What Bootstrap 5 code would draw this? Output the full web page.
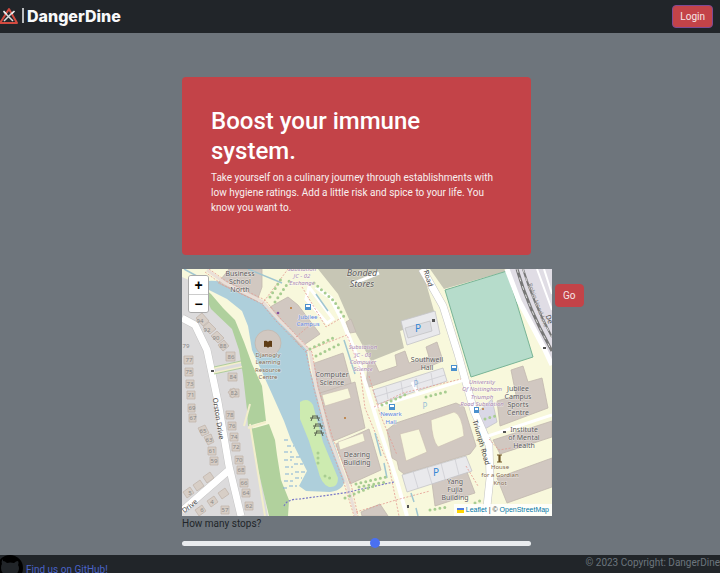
<!DOCTYPE html>
<html lang="en">
<head>
<meta charset="utf-8">
<meta name="viewport" content="width=device-width, initial-scale=1">
<title>DangerDine</title>
<link href="https://cdn.jsdelivr.net/npm/bootstrap@5.3.0/dist/css/bootstrap.min.css" rel="stylesheet">
<script src="https://cdn.jsdelivr.net/npm/bootstrap@5.3.0/dist/js/bootstrap.bundle.min.js" defer></script>
<style>
body{font-family:Roboto,"Liberation Sans",sans-serif;font-size:10px;line-height:15px;background:#6e757c;color:#212529;height:100vh;overflow:hidden}
.topbar{background:#212529;min-height:33px;padding:0 7px 0 0}
.brand{font:800 16px/20px Inter,sans-serif;color:#f8f9fa;text-decoration:none;padding-bottom:2px}
.brand-rule{width:2px;height:15px;background:#b9bcbe;margin:0 3px 0 4px}
.btn-danger-dine{--bs-btn-color:#f6e6e7;--bs-btn-bg:#c34348;--bs-btn-border-color:#c34348;--bs-btn-hover-color:#fff;--bs-btn-hover-bg:#aa383d;--bs-btn-font-size:10px;--bs-btn-line-height:15px;--bs-btn-padding-y:3px;--bs-btn-padding-x:7px;--bs-btn-border-radius:4px}
.btn-login{--bs-btn-border-color:#7d4a93}
.planner{margin-left:25%;padding:44px 0 0 2px}
.hero,.stops{max-width:349px}
.hero{background:#c34348;color:#f8f0f0;border-radius:4px;padding:29px 29px 40px;margin-bottom:14px}
.hero h1{font-size:24px;line-height:30px;font-weight:500;margin-bottom:4px;color:#fff}
.map-box{flex:0 1 370px;min-width:0}
.map-box > svg{display:block;width:100%;height:auto}
.zoomer{top:6px;left:6px;border:1px solid #aaa;border-radius:3px;overflow:hidden}
.zoomer button{display:block;width:19px;height:18px;border:0;background:#fff;color:#000;font:700 14px/14px "Liberation Sans",sans-serif;padding:0}
.zoomer button+button{border-top:1px solid #ccc}
.credit{right:0;bottom:0;background:rgba(255,255,255,.8);font:7px/12px "Liberation Sans",sans-serif;padding:0 3px;color:#333}
.credit a{color:#0078a8;text-decoration:none}
.flag{width:7px;height:5px}
.go-btn{margin:15px 0 0 3px}
.stops .form-range{height:10px;padding:0}
.form-range::-webkit-slider-runnable-track{height:5px;background:#e9ecef}
.form-range::-webkit-slider-thumb{width:10px;height:10px;margin-top:-3px;background:#4a70f0}
.stops label{margin-bottom:7px}
.foot{background:#212529;height:40px;margin-top:7px;color:#6c757d}
.foot a{color:#4a63c8;padding-top:7px;text-decoration:none}
.foot svg{margin:0 3px 0 -3px}
</style>
</head>
<body>
<nav class="topbar d-flex align-items-center justify-content-between">
  <a class="brand d-flex align-items-center" href="#">
    <svg width="18" height="18" viewBox="0 0 18 18" aria-hidden="true"><path d="M9 2 17 16H0Z" fill="#24272b" stroke="#d34b40" stroke-width="2" stroke-linejoin="round"/><path d="M4 5l9 9M13 5l-9 9" stroke="#ddd" stroke-width="1.500"/><path d="M3.500 4l3 3M14.500 4l-3 3" stroke="#eee" stroke-width="1.600"/></svg>
    <span class="brand-rule"></span>DangerDine
  </a>
  <button type="button" class="btn btn-danger-dine btn-login">Login</button>
</nav>
<main class="planner">
  <section class="hero">
    <h1>Boost your immune system.</h1>
    <p class="mb-0">Take yourself on a culinary journey through establishments with low hygiene ratings. Add a little risk and spice to your life. You know you want to.</p>
  </section>
  <div class="d-flex align-items-start">
    <div class="map-box position-relative">
      <svg viewBox="182 269 370 247" role="img" aria-label="Street map of Jubilee Campus" font-family="Noto Sans, sans-serif">
        <rect x="182" y="269" width="370" height="247" fill="#f8f8dc"/>
        <!-- housing area -->
        <path d="M182 277 198 284 211 303 235 329 240 352 251 417 268 516H182Z" fill="#dcdbdc"/>
        <!-- woodland -->
        <path d="M200 285 211 294 223 308 235 320 244 342 252 364 262 386 266 421 248 426 247 410 243 375 239 350 232 329 211 309Z" fill="#afd09d"/>
        <path d="M251 429 269 424 275 440 277 455 281 480 289 500 288 516H269L258 469Z" fill="#b1d19d"/>
        <!-- lake -->
        <path d="M208 281Q220 280 231 286L246 295 265 305 283 324 307 350 310 369 322 410 338 455 345 478Q345 490 330 492L306 491 299 486 307 471 291 440 284 421 272 394 262 372 252 350 248 326 242 311 227 299 209 290Z" fill="#aecfdb"/>
        <path d="M300 402Q308 397 313 405L323 442 338 478Q338 488 329 487 321 484 318 470L309 441 300 419Z" fill="#cdebb0"/>
        <path d="M284 440h6m-3 6h7m-10 6h8m-2 5h10m-16 3h8m2 4h9m-18 3h8m2 5h10m-20 2h8m2 4h7m-18 3h9m-4 5h8m-14 2h6" stroke="#82b0d7" stroke-dasharray="4 2" fill="none"/>
        <!-- ground and pitch -->
        <path d="M318 269H422L436 318 400 331 404 348 371 361 352 326 338 294Z" fill="#c7c6b5"/>
        <path d="M430 269H504L507 271 444 289Z" fill="#c7c6b5"/>
        <path d="M445 290 507 271 533 357 471 377Z" fill="#b6dccb" stroke="#78b496"/>
        <path d="M507 269H552V361L544 350Z" fill="#e0dde5"/>
        <path d="M507 269 519 301 544 348 552 365" stroke="#fff" stroke-width="5" fill="none"/>
        <g fill="none"><path d="M517 269Q528 308 552 351" stroke="#777" stroke-width="3"/><path d="M523 269Q533 302 552 337" stroke="#777" stroke-width="2"/><path d="M517 269Q528 308 552 351M523 269Q533 302 552 337" stroke="#ddd" stroke-dasharray="4 5"/><path d="M537 269 552 310M544 269 552 294" stroke="#fff" stroke-width="2"/></g>
        <!-- buildings -->
        <g fill="#d1c8c1" stroke="#c2b7af" stroke-width=".8">
          <path d="M229 269H262V287L257 301 218 283Z"/>
          <path d="M288 297 298 305 320 334 301 347 270 307Z"/>
          <circle cx="268" cy="343" r="13"/>
          <path d="M312 364 343 353 352 386 320 399Z"/>
          <path d="M320 393 355 382 365 428 331 442Z"/>
          <path d="M336 444 369 429 381 470 350 484Z"/>
          <path d="M368 363 374 361 379 372 397 366 395 355 405 351 409 363 429 357 426 347 437 342 443 361 425 368 366 388Z"/>
          <path d="M346 322 351 319 356 332 350 333Z"/>
          <path d="M511 370 523 366 528 382 542 378 548 408 500 426 497 401 511 397 516 395Z"/>
          <path d="M387 430 396 423 456 403 464 407 476 446 470 454 404 474 399 470 397 461 392 458Z"/>
          <path d="M493 440 552 421V437L500 454Z"/>
          <path d="M497 478 552 458V487L507 503Z"/>
          <path d="M432 483 467 472 475 493 435 506Z"/>
          <path d="M361 512 380 504 388 516H362Z"/>
        </g>
        <g fill="#f8f8dc" stroke="#c9bcb1" stroke-width=".6"><path d="M322 395 348 388 351 398 325 406Z"/><path d="M338 442 363 433 365 441 340 450Z"/><path d="M400 434 419 429 427 452 406 461Z"/><path d="M431 420 454 412Q462 414 464 436L438 447Q432 440 431 420Z"/></g>
        <!-- car parks -->
        <g fill="#e9e9ec" stroke="#c4c4c8" stroke-width=".8"><path d="M401 321 435 311 440 334 407 345Z"/><path d="M373 390 443 368 447 381 378 404Z"/><path d="M402 475 466 456 472 471 407 492Z"/><path d="M477 413 492 399 497 422 483 430Z" fill="#dad8e6"/></g>
        <path d="M405 328 430 321 432 331 408 338Z" fill="#dcdde2" stroke="#bbb" stroke-width=".6"/>
        <path d="M375 397 445 375M413 471l5 17M427 467l5 17M441 463l4 16M455 459l4 16M386 387l2 12M401 382l2 12M416 378l2 12M431 373l2 12" stroke="#cacad0" stroke-width=".7"/>
        <!-- streets -->
        <g fill="none" stroke="#c4c4c4" stroke-width="8"><path d="M182 318 195 325 207 350 218 402 229 466 241 516M228 471 182 511M422 269 443 306 458 354 474 411 489 445 490 478 486 516"/></g>
        <g fill="none" stroke="#fff" stroke-width="7"><path d="M182 318 195 325 207 350 218 402 229 466 241 516M228 471 182 511M422 269 443 306 458 354 474 411 489 445 490 478 486 516"/><path d="M316 287 331 298 342 320 356 354 366 385 379 427 396 478 407 516" stroke-width="4"/><path d="M373 408 464 380M488 436 552 415M412 382 418 394M309 287 333 319 327 323 306 299Z" stroke-width="3"/><path d="M352 284 379 273" stroke-width="3"/></g>
        <path d="M248 428 266 422M244 426 250 404M250 424 265 516M214 368 241 362M214 373 242 367" stroke="#f2eecb" stroke-width="2" fill="none"/>
        <path d="M214 367 241 361M214 374 242 368" stroke="#9fc58e" stroke-width=".8" fill="none"/>
        <!-- paths -->
        <path d="M207 270 225 283 263 302 279 320 310 351 316 387 329 437 347 483 356 516" fill="none" stroke="#eadfd8" stroke-width="3"/>
        <g fill="none" stroke="#e39b92" stroke-width=".8" stroke-dasharray="2 1.500"><path d="M205 272 223 285 262 304 276 321 306 352 314 389 327 438 344 483 354 516M209 269 226 281 265 300 281 319 312 352 318 386 332 436 351 484 358 516M262 304 288 269M296 337 310 325M302 287 326 327 341 318M306 351 347 335 360 369 365 408 389 466 399 516M356 512 396 500 430 491M369 376 380 414 397 455M374 407 403 393 461 379M489 439 499 450 511 448M466 466 478 486"/></g>
        <path d="M284 506Q287 499 300 499L344 493 394 482" fill="none" stroke="#7776c7" stroke-width="1.200" stroke-dasharray="2 1.500"/>
        <g fill="none" stroke="#a0c6d0" stroke-width="1.500"><path d="M184 269 206 281M248 269 282 283M344 340 355 374M375 433 381 456M384 463 387 478M316 294 328 311M411 493l3 9M416 508l2 8"/></g>
        <!-- shrubs -->
        <g fill="none" stroke="#a8cd91" stroke-width="3" stroke-linecap="round" stroke-dasharray="0 5"><path d="M270 297 281 279M275 302 290 280M314 283 334 301 346 320M310 349 337 336M316 356 340 344M356 484 386 477M359 487 386 482M345 498 354 494 374 486M318 453v14M325 476 332 479M382 405 409 393M426 397 449 391M485 419 495 416M475 503 482 500M430 510 448 507"/></g>
        <!-- houses -->
        <g fill="#d7cec6" stroke="#beb1a7" stroke-width=".7"><path d="M226 352h9v9h-9zM228 373h9v8h-9zM230 389h9v8h-9zM184 356h9v8h-9zM185 368h8v8h-8zM186 380h8v8h-8zM187 391h8v8h-8zM188 404h7v8h-7zM189 414h7v8h-7zM226 411h8v8h-8zM228 422h8v8h-8zM230 433h8v8h-8zM232 443h8v8h-8zM235 456h8v8h-8zM237 466h8v8h-8zM240 479h8v8h-8zM242 489h8v8h-8zM245 502h8v8h-8zM208 447h8v8h-8zM210 457h8v8h-8zM221 506h8v8h-8z"/><path d="M196 318l6-5 7 8-6 5zM203 327l6-5 7 7-6 5zM211 336l6-5 7 7-6 5zM218 345l6-5 5 6-6 5zM228 392l6-4 4 6-6 4zM198 428l7-3 4 8-7 3zM204 437l7-3 3 8-6 3zM183 492l7-5 4 6-7 5zM193 485l7-5 4 6-7 5zM203 477l7-5 4 6-7 5zM195 510l7-5 4 6-7 5zM207 501l7-5 4 6-7 5zM218 493l7-5 4 6-7 5z"/></g>
        <g fill="#888" font-size="6" text-anchor="middle">
          <text x="231" y="359">86</text><text x="233" y="379">84</text><text x="234" y="395">82</text><text x="189" y="362">77</text><text x="189" y="374">75</text><text x="190" y="386">73</text><text x="191" y="397">71</text><text x="192" y="410">69</text><text x="193" y="420">67</text><text x="230" y="417">78</text><text x="232" y="428">76</text><text x="234" y="439">74</text><text x="236" y="449">72</text><text x="239" y="462">70</text><text x="241" y="472">68</text><text x="244" y="485">66</text><text x="246" y="495">64</text><text x="249" y="508">62</text><text x="212" y="453">61</text><text x="214" y="463">59</text><text x="225" y="512">57</text><text x="200" y="323">94</text><text x="207" y="332">92</text><text x="216" y="340">90</text><text x="223" y="348">88</text><text x="203" y="433">65</text><text x="209" y="442">63</text><text x="190" y="495">5</text><text x="212" y="504">4</text><text x="202" y="512">6</text><text x="186" y="348">79</text>
        </g>
        <!-- place names -->
        <g fill="#5c5a5a" font-size="7" text-anchor="middle" stroke="#fff" stroke-opacity=".5" stroke-width="1" paint-order="stroke">
          <text x="240" y="276">Business</text><text x="240" y="284">School</text><text x="240" y="292">North</text>
          <text x="332" y="377">Computer</text><text x="332" y="385">Science</text>
          <text x="357" y="457">Dearing</text><text x="357" y="465">Building</text>
          <text x="427" y="362">Southwell</text><text x="427" y="370">Hall</text>
          <text x="518" y="391">Jubilee</text><text x="518" y="399">Campus</text><text x="518" y="407">Sports</text><text x="518" y="415">Centre</text>
          <text x="524" y="432">Institute</text><text x="524" y="440">of Mental</text><text x="524" y="448">Health</text>
          <text x="455" y="484">Yang</text><text x="455" y="492">Fujia</text><text x="455" y="500">Building</text>
          <g font-size="9" font-style="italic"><text x="362" y="276">Bonded</text><text x="362" y="287">Stores</text></g>
          <g fill="#80674c" font-size="6"><text x="268" y="357">Djanogly</text><text x="268" y="364">Learning</text><text x="268" y="372">Resource</text><text x="268" y="379">Centre</text><text x="500" y="469">House</text><text x="500" y="477">for a Gordian</text><text x="500" y="485">Knot</text></g>
          <g fill="#a987b2" font-size="6" font-style="italic"><text x="302" y="271">Substation</text><text x="302" y="278">JC - 02</text><text x="302" y="285">Exchange</text><text x="363" y="349">Substation</text><text x="363" y="357">JC - 03</text><text x="363" y="364">Computer</text><text x="363" y="371">Science</text><text x="482" y="384">University</text><text x="482" y="391">Of Nottingham</text><text x="482" y="399">Triumph</text><text x="482" y="406">Road Substation</text></g>
          <g fill="#5b83e0" font-size="6"><text x="308" y="319">Jubilee</text><text x="308" y="326">Campus</text><text x="391" y="416">Newark</text><text x="391" y="424">Hall</text></g>
        </g>
        <g fill="#444" font-size="7" text-anchor="middle"><text transform="translate(216 419) rotate(81)">Orston Drive</text><text transform="translate(191 508) rotate(-38)">Drive</text><text transform="translate(426 279) rotate(72)">Road</text><text transform="translate(479 443) rotate(74)">Triumph Road</text><text transform="translate(536 306) rotate(69)" fill="#888" font-size="6">Robin Hood Line</text><text transform="translate(547 320) rotate(70)">De</text></g>
        <!-- points of interest -->
        <g fill="#3487d4" font-size="10" text-anchor="middle"><text x="418" y="332">P</text><text x="436" y="476">P</text><text x="416" y="387" font-size="8" opacity=".5">P</text><text x="425" y="409" font-size="8" opacity=".5">P</text></g>
        <path d="M305 304h6v6h-6zM389 404h6v6h-6zM451 365h6v6h-6zM474 407h5v6h-5z" fill="#4a90cd"/>
        <path d="M306 305h4v2h-4zM390 405h4v2h-4zM452 366h4v2h-4zM475 408h3v2h-3z" fill="#fff"/>
        <path d="M264 341q3-1 4 1 1-2 4-1v6q-3-1-4 1-1-2-4-1z" fill="#5f3d16"/>
        <g fill="none" stroke="#58614f" stroke-width="1"><path d="M312 416h6m-8 2h10m-7-2-2 5m6-5 2 5M315 424h6m-8 2h10m-7-2-2 5m6-5 2 5M316 431h6m-8 2h10m-7-2-2 5m6-5 2 5"/></g>
        <path d="M497 455h5m-5 7h5m-3-7v7m1-7v7" stroke="#6f5525" stroke-width="1.200"/>
        <path d="M211 370h3v2h-3zM432 319h3v3h-3zM543 347h3v2h-3zM503 431h3v2h-3zM407 505h2v3h-2z" fill="#555"/>
        <g fill="#b8752f"><circle cx="291" cy="308" r="1"/><circle cx="345" cy="418" r="1"/><circle cx="483" cy="409" r="1"/><circle cx="278" cy="313" r="1.300" fill="#8352a0"/></g>
      </svg>
      <div class="zoomer position-absolute"><button type="button" aria-label="Zoom in">+</button><button type="button" aria-label="Zoom out">−</button></div>
      <div class="credit position-absolute"><svg class="flag" viewBox="0 0 7 5" aria-hidden="true"><path fill="#4c7be1" d="M0 0h7v2H0z"/><path fill="#ffd500" d="M0 2h7v3H0z"/></svg> <a href="#">Leaflet</a> | © <a href="#">OpenStreetMap</a></div>
    </div>
    <button type="button" class="btn btn-danger-dine go-btn">Go</button>
  </div>
  <div class="stops">
    <label for="stops" class="d-block">How many stops?</label>
    <input type="range" class="form-range d-block" id="stops" min="1" max="10" step="any" value="6">
  </div>
</main>
<footer class="foot d-flex align-items-start justify-content-between">
  <div class="d-flex align-items-start">
    <svg width="26" height="26" viewBox="0 0 26 26" aria-hidden="true"><circle cx="13" cy="13" r="13" fill="#000"/><path d="M6 6q2 0 4 2 3-1 7 0 2-2 4-2 1 2 0 4 2 3 0 7-2 3-5 3v6h-6v-4q-4 0-5-3 3 2 5 1-6-1-6-7 0-3 1-4-1-3 1-5" fill="#212529"/></svg>
    <a href="#">Find us on GitHub!</a>
  </div>
  <span>© 2023 Copyright: DangerDine</span>
</footer>
</body>
</html>
